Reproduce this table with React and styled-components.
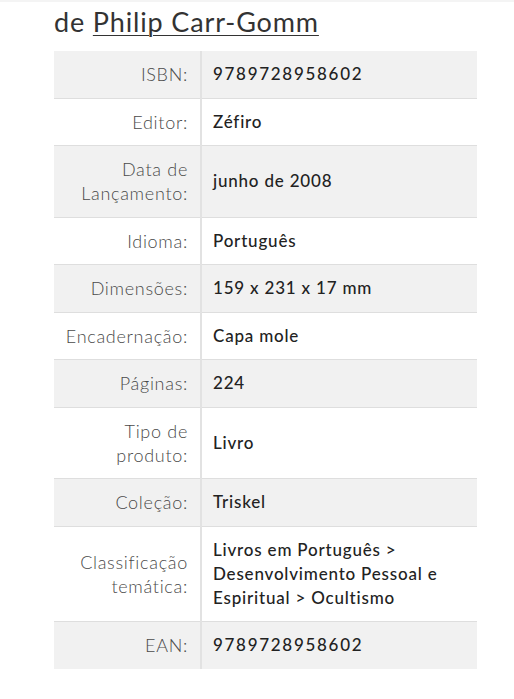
import styled, { createGlobalStyle } from 'styled-components';

const GlobalStyle = createGlobalStyle`
  html, body {
    margin: 0;
    padding: 0;
    background: #fff;
  }
  body {
    font-family: 'Lato', 'Liberation Sans', sans-serif;
    color: #222;
  }
`;

const details = [
  { label: 'ISBN:', value: '9789728958602', code: true },
  { label: 'Editor:', value: 'Zéfiro' },
  { label: ['Data de', 'Lançamento:'], value: 'junho de 2008' },
  { label: 'Idioma:', value: 'Português' },
  { label: 'Dimensões:', value: '159 x 231 x 17 mm' },
  { label: 'Encadernação:', value: 'Capa mole' },
  { label: 'Páginas:', value: '224' },
  { label: ['Tipo de', 'produto:'], value: 'Livro' },
  { label: 'Coleção:', value: 'Triskel' },
  {
    label: ['Classificação', 'temática:'],
    value: ['Livros em Português >', 'Desenvolvimento Pessoal e', 'Espiritual > Ocultismo'],
  },
  { label: 'EAN:', value: '9789728958602', code: true },
];

const Lines = ({ text }) =>
  Array.isArray(text)
    ? text.map((line, i) => (
        <span key={i}>
          {line}
          {i < text.length - 1 && <br />}
        </span>
      ))
    : text;

const App = () => {
  return (
    <Page>
      <GlobalStyle />
      <TopRule />
      <Author>
        de <a href="#">Philip Carr-Gomm</a>
      </Author>
      <DetailsTable>
        <tbody>
          {details.map((row, index) => (
            <Row key={index} $shaded={index % 2 === 0}>
              <Label>
                <Lines text={row.label} />
              </Label>
              <Value $code={row.code}>
                <Lines text={row.value} />
              </Value>
            </Row>
          ))}
        </tbody>
      </DetailsTable>
    </Page>
  );
};

const Page = styled.div`
  padding: 0 37px 30px 54px;
`;

const TopRule = styled.div`
  height: 2px;
  margin-left: -54px;
  margin-right: -37px;
  background: #f4f4f4;
`;

const Author = styled.h2`
  margin: 0;
  padding-top: 3px;
  font-size: 27px;
  font-weight: 400;
  line-height: 34px;
  color: #333;
  letter-spacing: 0.85px;

  a {
    color: #333;
    text-decoration: underline;
    text-underline-offset: 3px;
    text-decoration-thickness: 1px;
  }
`;

const DetailsTable = styled.table`
  width: 423px;
  margin-top: 12px;
  border-collapse: collapse;
  line-height: 24px;
`;

const Row = styled.tr`
  background: ${(p) => (p.$shaded ? '#f1f1f1' : '#fff')};
  border-bottom: 1px solid #dedede;

  &:last-child {
    border-bottom: none;
  }
`;

const Label = styled.td`
  width: 134px;
  padding: 11px 12px 11.5px 0;
  text-align: right;
  vertical-align: middle;
  font-size: 18px;
  color: #4a4a4a;
  font-weight: 300;
  border-right: 2px solid #e2e2e2;
  letter-spacing: 0.7px;
`;

const Value = styled.td`
  padding: 11px 12px 11.5px 11px;
  vertical-align: middle;
  font-size: 17px;
  color: #222;
  font-weight: 500;
  letter-spacing: ${(p) => (p.$code ? '1.7px' : '0.8px')};
`;

export default App;
